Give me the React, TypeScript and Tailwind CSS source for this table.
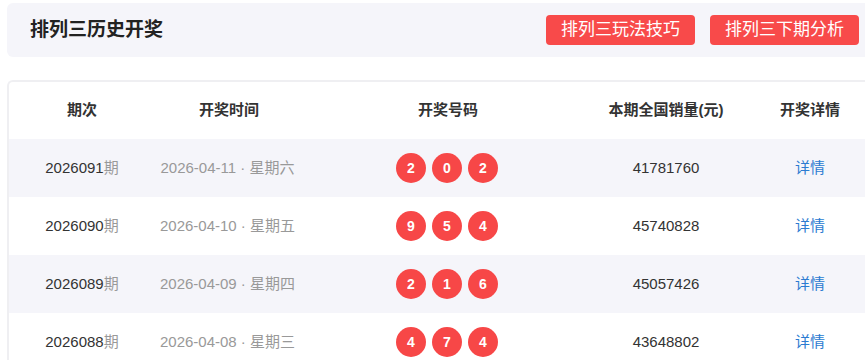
const draws = [
    { issue: '2026091', date: '2026-04-11', week: '星期六', balls: [2, 0, 2], sales: '41781760' },
    { issue: '2026090', date: '2026-04-10', week: '星期五', balls: [9, 5, 4], sales: '45740828' },
    { issue: '2026089', date: '2026-04-09', week: '星期四', balls: [2, 1, 6], sales: '45057426' },
    { issue: '2026088', date: '2026-04-08', week: '星期三', balls: [4, 7, 4], sales: '43648802' },
];

const cols = 'grid grid-cols-[146px_148px_290px_146px_142px] items-center';

const App = () => {
    return (
        <div className="w-[865px] h-[360px] overflow-hidden bg-white font-['Liberation_Sans','Noto_Sans_CJK_SC',sans-serif]">
            <div className="w-[874px] ml-[7px] pt-[3px]">
                {/* 顶部标题栏 */}
                <div className="h-[54px] bg-[#f5f5fa] rounded-[6px] flex items-center justify-between pl-[23px] pr-[22px]">
                    <h1 className="text-[19px] font-bold text-[#222]">排列三历史开奖</h1>
                    <div className="flex gap-[15px]">
                        <button className="h-[30px] px-[15px] bg-[#f84a4a] text-white text-[17px] rounded-[4px]">排列三玩法技巧</button>
                        <button className="h-[30px] px-[15px] bg-[#f84a4a] text-white text-[17px] rounded-[4px]">排列三下期分析</button>
                    </div>
                </div>

                {/* 开奖列表 */}
                <div className="mt-[23px] border-t-2 border-l-2 border-[#efeff2] rounded-tl-[6px] overflow-hidden">
                    <div className={`${cols} h-[57px] text-[15px] font-bold text-[#333] text-center`}>
                        <div>期次</div>
                        <div>开奖时间</div>
                        <div>开奖号码</div>
                        <div>本期全国销量(元)</div>
                        <div>开奖详情</div>
                    </div>
                    {draws.map((d, i) => (
                        <div key={d.issue} className={`${cols} h-[58px] text-[15px] text-center ${i % 2 === 0 ? 'bg-[#f5f5fa]' : 'bg-white'}`}>
                            <div className="text-[#333]">
                                {d.issue}<span className="text-[#999]">期</span>
                            </div>
                            <div className="text-[#999] pr-[3px]">{d.date} · {d.week}</div>
                            <div className="flex justify-center gap-[6px] pr-[2px]">
                                {d.balls.map((b, j) => (
                                    <span key={j} className="w-[30px] h-[30px] rounded-full bg-[#f74747] text-white text-[14px] font-bold flex items-center justify-center">
                                        {b}
                                    </span>
                                ))}
                            </div>
                            <div className="text-[#333]">{d.sales}</div>
                            <div>
                                <a href="#" className="text-[#2b7bd1]">详情</a>
                            </div>
                        </div>
                    ))}
                </div>
            </div>
        </div>
    );
};

export default App;
